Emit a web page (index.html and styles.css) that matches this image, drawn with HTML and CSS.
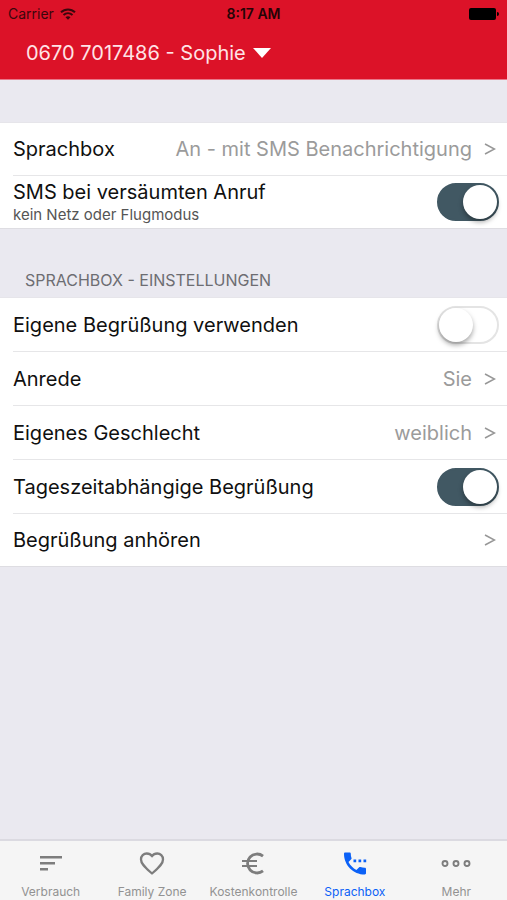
FILE: index.html
```html
<!DOCTYPE html>
<html lang="de">
<head>
<meta charset="utf-8">
<meta name="viewport" content="width=device-width, initial-scale=1">
<title>Sprachbox</title>
<link rel="stylesheet" href="styles.css">
</head>
<body>
<header class="header">
  <div class="status">
    <div class="carrier">
      <span>Carrier</span>
      <svg width="16" height="12" viewBox="0 0 16 12" fill="none" stroke="currentColor" stroke-width="2" aria-hidden="true">
        <path d="M1 4.300C5 .4 11 .4 15 4.300"/>
        <path d="M3.500 7C6.200 4.500 9.800 4.500 12.500 7"/>
        <path d="M8 11.800 5.500 9.200C7 7.800 9 7.800 10.500 9.200Z" fill="currentColor" stroke="none"/>
      </svg>
    </div>
    <span class="time">8:17 AM</span>
    <svg class="battery" width="30" height="12" viewBox="0 0 30 12" fill="currentColor" aria-hidden="true">
      <rect x="0" y="0" width="27" height="12" rx="2"/>
      <path d="M28 4a2 2 0 0 1 0 4Z"/>
    </svg>
  </div>
  <button class="account" type="button">
    <span>0670 7017486 - Sophie</span>
    <svg width="18" height="10" viewBox="0 0 18 10" fill="currentColor" aria-hidden="true"><path d="M0 0H18L9 10Z"/></svg>
  </button>
</header>

<main class="content">
  <section class="group">
    <a class="row" href="#sprachbox">
      <span class="label">Sprachbox</span>
      <span class="value">An - mit SMS Benachrichtigung</span>
      <svg class="chevron" width="12" height="12" viewBox="0 0 12 12" aria-hidden="true"><path d="M1 1 10.500 6 1 11"/></svg>
    </a>
    <label class="row">
      <span class="label double">SMS bei versäumten Anruf<small>kein Netz oder Flugmodus</small></span>
      <input class="switch" type="checkbox" checked>
    </label>
  </section>

  <h2 class="heading">SPRACHBOX - EINSTELLUNGEN</h2>

  <section class="group tall">
    <label class="row">
      <span class="label">Eigene Begrüßung verwenden</span>
      <input class="switch" type="checkbox">
    </label>
    <a class="row" href="#anrede">
      <span class="label">Anrede</span>
      <span class="value">Sie</span>
      <svg class="chevron" width="12" height="12" viewBox="0 0 12 12" aria-hidden="true"><path d="M1 1 10.500 6 1 11"/></svg>
    </a>
    <a class="row" href="#geschlecht">
      <span class="label">Eigenes Geschlecht</span>
      <span class="value">weiblich</span>
      <svg class="chevron" width="12" height="12" viewBox="0 0 12 12" aria-hidden="true"><path d="M1 1 10.500 6 1 11"/></svg>
    </a>
    <label class="row">
      <span class="label">Tageszeitabhängige Begrüßung</span>
      <input class="switch" type="checkbox" checked>
    </label>
    <a class="row" href="#anhoeren">
      <span class="label">Begrüßung anhören</span>
      <svg class="chevron" width="12" height="12" viewBox="0 0 12 12" aria-hidden="true"><path d="M1 1 10.500 6 1 11"/></svg>
    </a>
  </section>
</main>

<nav class="tabs">
  <a class="tab" href="#verbrauch">
    <svg width="28" height="28" viewBox="0 0 28 28" fill="currentColor" aria-hidden="true"><path d="M3 6H25V8.500H3ZM3 12H18V14.500H3ZM3 18H11V20.500H3Z"/></svg>
    <span>Verbrauch</span>
  </a>
  <a class="tab" href="#family">
    <svg width="28" height="28" viewBox="0 0 28 28" fill="none" stroke="currentColor" stroke-width="2.300" stroke-linejoin="round" aria-hidden="true"><path d="M14 23.500 12.300 22C6.500 16.800 3 13.500 3 9.400 3 6 5.600 3.500 8.800 3.500 10.800 3.500 12.800 4.500 14 6.200 15.200 4.500 17.200 3.500 19.200 3.500 22.400 3.500 25 6 25 9.400 25 13.500 21.500 16.800 15.700 22Z"/></svg>
    <span>Family Zone</span>
  </a>
  <a class="tab" href="#kosten">
    <svg width="28" height="28" viewBox="0 0 28 28" fill="none" stroke="currentColor" stroke-width="2.800" aria-hidden="true"><path d="M24 6.100A9.500 9.500 0 1 0 24 20.900"/><path d="M3 11H18M3 16H18" stroke-width="2.200"/></svg>
    <span>Kostenkontrolle</span>
  </a>
  <a class="tab active" href="#sprachbox" aria-current="page">
    <svg width="28" height="28" viewBox="0 0 28 28" fill="currentColor" aria-hidden="true"><path d="M4.200 2.500H8.600C9.300 2.500 9.800 3 9.800 3.700 9.800 5.300 10 6.700 10.500 8 10.700 8.500 10.600 8.900 10.200 9.300L7.500 12.100C9.300 15.500 12 18.200 15.400 20L18.200 17.300C18.500 16.900 19 16.800 19.500 17 20.800 17.400 22.200 17.700 23.800 17.700 24.500 17.700 25 18.200 25 18.900V23.300C25 24 24.500 24.500 23.800 24.500 12.300 24.500 3 15.200 3 3.700 3 3 3.500 2.500 4.200 2.500Z"/><path d="M12.500 9.500h2.700v2.700h-2.700ZM17.500 9.500h2.700v2.700h-2.700ZM22.500 9.500h2.700v2.700h-2.700Z"/></svg>
    <span>Sprachbox</span>
  </a>
  <a class="tab" href="#mehr">
    <svg width="30" height="28" viewBox="0 0 30 28" fill="none" stroke="currentColor" stroke-width="1.900" aria-hidden="true"><circle cx="4" cy="13.500" r="2.500"/><circle cx="15" cy="13.500" r="2.500"/><circle cx="26" cy="13.500" r="2.500"/></svg>
    <span>Mehr</span>
  </a>
</nav>
</body>
</html>
```

FILE: styles.css
```css
* {
  box-sizing: border-box;
}

body {
  margin: 0;
  min-height: 100vh;
  display: flex;
  flex-direction: column;
  background: #eae9f0;
  color: #101010;
  font-family: Inter, "Liberation Sans", sans-serif;
  font-size: 20px;
  line-height: 24px;
}

a {
  color: inherit;
  text-decoration: none;
}

.header {
  background: #dc1228;
  border-bottom: 1px solid #e9788a;
}

.status {
  display: grid;
  grid-template-columns: 1fr auto 1fr;
  align-items: center;
  height: 27px;
  padding: 0 8px;
  color: #3a070c;
  font-size: 14px;
}

.carrier {
  display: flex;
  align-items: center;
  gap: 6px;
}

.time {
  font-weight: 600;
  color: #240406;
}

.battery {
  justify-self: end;
  color: #000;
}

.account {
  display: flex;
  align-items: center;
  gap: 7px;
  height: 52px;
  padding: 0 26px;
  border: 0;
  background: none;
  color: #fff;
  font: inherit;
}

.account span {
  color: #ffe3e6;
}

.content {
  flex: 1;
  padding-top: 42px;
}

.group {
  background: #fff;
  border-top: 1px solid #e6e5ea;
  border-bottom: 1px solid #dedde2;
  padding-left: 13px;
}

.row {
  display: flex;
  align-items: center;
  height: 53px;
  padding-right: 11px;
  border-bottom: 1px solid #e6e6e8;
}

.tall .row {
  height: 54px;
}

.row:last-child {
  height: 52px;
  border-bottom: 0;
}

.label {
  flex: 1;
}

.double {
  line-height: 26px;
}

.double small {
  display: block;
  color: #555;
  font-size: 15px;
  line-height: 20px;
}

.value {
  color: #9b9b9b;
}

.chevron {
  margin-left: 12px;
  fill: none;
  stroke: #979797;
  stroke-width: 1.500;
}

.switch {
  appearance: none;
  width: 62px;
  height: 38px;
  margin: 0 -3px 0 0;
  padding: 1px;
  border: 2px solid #e4e4e4;
  border-radius: 19px;
  background: #fff;
}

.switch::before {
  content: "";
  display: block;
  width: 34px;
  height: 34px;
  margin: -1px;
  border-radius: 50%;
  background: #fff;
  box-shadow: 0 3px 5px rgba(0, 0, 0, 0.35);
}

.switch:checked {
  border-color: #415863;
  background: #415863;
}

.switch:checked::before {
  margin-left: 23px;
}

.heading {
  margin: 0;
  padding: 39px 25px 5px;
  color: #6d6d72;
  font-size: 16px;
  font-weight: 400;
  line-height: 24px;
}

.tabs {
  display: grid;
  grid-template-columns: repeat(5, 1fr);
  border-top: 2px solid #dbdae1;
  background: #f5f5f5;
}

.tab {
  display: flex;
  flex-direction: column;
  align-items: center;
  gap: 6px;
  padding-top: 9px;
  color: #929292;
  font-size: 12px;
  line-height: 16px;
  white-space: nowrap;
}

.tab svg {
  color: #7d7d7d;
}

.tab.active,
.tab.active svg {
  color: #0b61f7;
}
```
